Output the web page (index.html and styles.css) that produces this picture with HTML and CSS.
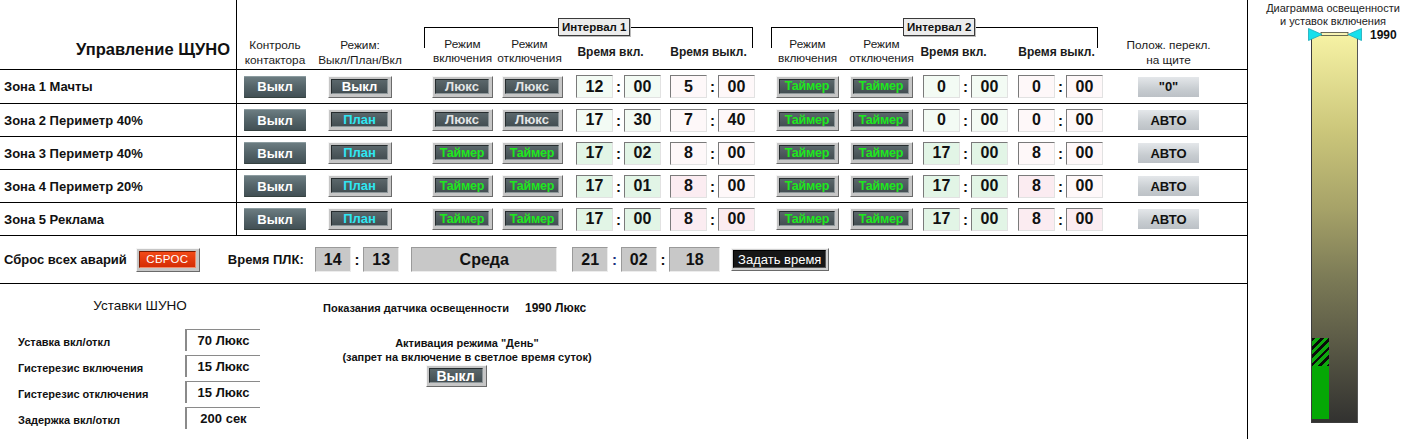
FILE: index.html
```html
<!DOCTYPE html>
<html lang="ru">
<head>
<meta charset="utf-8">
<title>Управление ЩУНО</title>
<link rel="stylesheet" href="styles.css">
</head>
<body>
<div class="screen">
  <main class="board">
    <section class="zones">
      <div class="row head">
        <div class="name title k1">Управление ЩУНО</div>
        <div class="cell k2"><div class="cap two w62">Контроль<br>контактора</div></div>
        <div class="cell k3"><div class="cap two w64">Режим:<br>Выкл/План/Вкл</div></div>
        <div class="cell k4"><div class="cap mode w61">Режим<br>включения</div></div>
        <div class="cell k5"><div class="cap mode w61 nudge-l">Режим<br>отключения</div></div>
        <div class="cell k6"><div class="cap time w85 on1">Время вкл.</div></div>
        <div class="cell k7"><div class="cap time w85 off1">Время выкл.</div></div>
        <div class="cell k8"><div class="cap mode w63">Режим<br>включения</div></div>
        <div class="cell k9"><div class="cap mode w63">Режим<br>отключения</div></div>
        <div class="cell k10"><div class="cap time w85 on2">Время вкл.</div></div>
        <div class="cell k11"><div class="cap time w85 off2">Время выкл.</div></div>
        <div class="cell k12"><div class="cap two w61">Полож. перекл.<br>на щите</div></div>
        <div class="bracket first"><span class="tag">Интервал 1</span></div>
        <div class="bracket second"><span class="tag">Интервал 2</span></div>
      </div>

      <div class="row zone">
        <div class="name">Зона 1 Мачты</div>
        <div class="cell"><span class="flat">Выкл</span></div>
        <div class="cell"><span class="raised w64"><span class="face">Выкл</span></span></div>
        <div class="cell"><span class="raised w61"><span class="face lux">Люкс</span></span></div>
        <div class="cell"><span class="raised w61"><span class="face lux">Люкс</span></span></div>
        <div class="cell"><span class="clock"><span class="num on pale">12</span><span class="colon">:</span><span class="num on pale">00</span></span></div>
        <div class="cell"><span class="clock"><span class="num off pale">5</span><span class="colon">:</span><span class="num off pale">00</span></span></div>
        <div class="cell"><span class="raised w63"><span class="face timer">Таймер</span></span></div>
        <div class="cell"><span class="raised w63"><span class="face timer">Таймер</span></span></div>
        <div class="cell"><span class="clock"><span class="num on pale">0</span><span class="colon">:</span><span class="num on pale">00</span></span></div>
        <div class="cell"><span class="clock"><span class="num off pale">0</span><span class="colon">:</span><span class="num off pale">00</span></span></div>
        <div class="cell"><span class="switch">"0"</span></div>
      </div>

      <div class="row zone">
        <div class="name">Зона 2 Периметр 40%</div>
        <div class="cell"><span class="flat">Выкл</span></div>
        <div class="cell"><span class="raised w64"><span class="face plan">План</span></span></div>
        <div class="cell"><span class="raised w61"><span class="face lux">Люкс</span></span></div>
        <div class="cell"><span class="raised w61"><span class="face lux">Люкс</span></span></div>
        <div class="cell"><span class="clock"><span class="num on pale">17</span><span class="colon">:</span><span class="num on pale">30</span></span></div>
        <div class="cell"><span class="clock"><span class="num off pale">7</span><span class="colon">:</span><span class="num off pale">40</span></span></div>
        <div class="cell"><span class="raised w63"><span class="face timer">Таймер</span></span></div>
        <div class="cell"><span class="raised w63"><span class="face timer">Таймер</span></span></div>
        <div class="cell"><span class="clock"><span class="num on pale">0</span><span class="colon">:</span><span class="num on pale">00</span></span></div>
        <div class="cell"><span class="clock"><span class="num off pale">0</span><span class="colon">:</span><span class="num off pale">00</span></span></div>
        <div class="cell"><span class="switch">АВТО</span></div>
      </div>

      <div class="row zone">
        <div class="name">Зона 3 Периметр 40%</div>
        <div class="cell"><span class="flat">Выкл</span></div>
        <div class="cell"><span class="raised w64"><span class="face plan">План</span></span></div>
        <div class="cell"><span class="raised w61"><span class="face timer">Таймер</span></span></div>
        <div class="cell"><span class="raised w61"><span class="face timer">Таймер</span></span></div>
        <div class="cell"><span class="clock"><span class="num on">17</span><span class="colon">:</span><span class="num on">02</span></span></div>
        <div class="cell"><span class="clock"><span class="num off pale">8</span><span class="colon">:</span><span class="num off pale">00</span></span></div>
        <div class="cell"><span class="raised w63"><span class="face timer">Таймер</span></span></div>
        <div class="cell"><span class="raised w63"><span class="face timer">Таймер</span></span></div>
        <div class="cell"><span class="clock"><span class="num on">17</span><span class="colon">:</span><span class="num on">00</span></span></div>
        <div class="cell"><span class="clock"><span class="num off pale">8</span><span class="colon">:</span><span class="num off pale">00</span></span></div>
        <div class="cell"><span class="switch">АВТО</span></div>
      </div>

      <div class="row zone">
        <div class="name">Зона 4 Периметр 20%</div>
        <div class="cell"><span class="flat">Выкл</span></div>
        <div class="cell"><span class="raised w64"><span class="face plan">План</span></span></div>
        <div class="cell"><span class="raised w61"><span class="face timer">Таймер</span></span></div>
        <div class="cell"><span class="raised w61"><span class="face timer">Таймер</span></span></div>
        <div class="cell"><span class="clock"><span class="num on">17</span><span class="colon">:</span><span class="num on">01</span></span></div>
        <div class="cell"><span class="clock"><span class="num off">8</span><span class="colon">:</span><span class="num off pale">00</span></span></div>
        <div class="cell"><span class="raised w63"><span class="face timer">Таймер</span></span></div>
        <div class="cell"><span class="raised w63"><span class="face timer">Таймер</span></span></div>
        <div class="cell"><span class="clock"><span class="num on">17</span><span class="colon">:</span><span class="num on">00</span></span></div>
        <div class="cell"><span class="clock"><span class="num off">8</span><span class="colon">:</span><span class="num off pale">00</span></span></div>
        <div class="cell"><span class="switch">АВТО</span></div>
      </div>

      <div class="row zone">
        <div class="name">Зона 5 Реклама</div>
        <div class="cell"><span class="flat">Выкл</span></div>
        <div class="cell"><span class="raised w64"><span class="face plan">План</span></span></div>
        <div class="cell"><span class="raised w61"><span class="face timer">Таймер</span></span></div>
        <div class="cell"><span class="raised w61"><span class="face timer">Таймер</span></span></div>
        <div class="cell"><span class="clock"><span class="num on">17</span><span class="colon">:</span><span class="num on">00</span></span></div>
        <div class="cell"><span class="clock"><span class="num off">8</span><span class="colon">:</span><span class="num off">00</span></span></div>
        <div class="cell"><span class="raised w63"><span class="face timer">Таймер</span></span></div>
        <div class="cell"><span class="raised w63"><span class="face timer">Таймер</span></span></div>
        <div class="cell"><span class="clock"><span class="num on">17</span><span class="colon">:</span><span class="num on">00</span></span></div>
        <div class="cell"><span class="clock"><span class="num off">8</span><span class="colon">:</span><span class="num off">00</span></span></div>
        <div class="cell"><span class="switch">АВТО</span></div>
      </div>
    </section>

    <section class="plc">
      <span class="label reset-label">Сброс всех аварий</span>
      <span class="raised reset"><span class="face red">СБРОС</span></span>
      <span class="label plc-label">Время ПЛК:</span>
      <span class="grey hh">14</span>
      <span class="sep">:</span>
      <span class="grey">13</span>
      <span class="grey day">Среда</span>
      <span class="grey dd">21</span>
      <span class="sep blue">:</span>
      <span class="grey">02</span>
      <span class="sep">:</span>
      <span class="grey yy">18</span>
      <span class="raised set"><span class="face black">Задать время</span></span>
    </section>

    <section class="lower">
      <div class="setpoints">
        <div class="sp-title">Уставки ШУНО</div>
        <div class="sp-grid">
          <span class="sp-label">Уставка вкл/откл</span><span class="sp-box">70 Люкс</span>
          <span class="sp-label">Гистерезис включения</span><span class="sp-box">15 Люкс</span>
          <span class="sp-label">Гистерезис отключения</span><span class="sp-box">15 Люкс</span>
          <span class="sp-label">Задержка вкл/откл</span><span class="sp-box">200 сек</span>
        </div>
      </div>
      <div class="sensor">
        <div class="reading"><span>Показания датчика освещенности</span><span class="lux-value">1990 Люкс</span></div>
        <div class="daymode">
          <span>Активация режима "День"</span>
          <span>(запрет на включение в светлое время суток)</span>
          <span class="raised w61 day-btn"><span class="face">Выкл</span></span>
        </div>
      </div>
    </section>
  </main>

  <aside class="gauge">
    <div class="gauge-title">Диаграмма освещенности<br>и уставок включения</div>
    <div class="column">
      <div class="marker">
        <svg width="56" height="14" viewBox="0 0 56 14">
          <rect x="13" y="4.5" width="27" height="3" fill="#f7f3b4" stroke="#4a4a3a" stroke-width="0.8"/>
          <polygon points="0.5,0.5 14,6.5 0.5,12.5" fill="#16e0ec" stroke="#1aa8b8" stroke-width="0.8"/>
          <polygon points="53.5,0.5 40,6.5 53.5,12.5" fill="#16e0ec" stroke="#1aa8b8" stroke-width="0.8"/>
        </svg>
        <span class="marker-value">1990</span>
      </div>
      <div class="level">
        <div class="hatch"></div>
        <div class="fill"></div>
      </div>
    </div>
  </aside>
</div>
</body>
</html>
```

FILE: styles.css
```css
* { box-sizing: border-box; }

html, body {
  margin: 0;
  background: #fff;
}

body {
  font-family: "Liberation Sans", Arial, sans-serif;
  color: #111;
  width: 1418px;
  height: 439px;
  overflow: hidden;
}

.screen {
  display: flex;
  height: 439px;
}

/* ---------- main board ---------- */

.board {
  width: 1248px;
  flex: none;
  border-right: 1px solid #000;
  display: flex;
  flex-direction: column;
}

.row {
  display: grid;
  grid-template-columns: 237px 69px 86px 101px 70px 98px 94px 84px 74px 95px 95px 96px 1fr;
  border-bottom: 1px solid #000;
}

.head {
  height: 70px;
  align-items: end;
}

.zone {
  height: 33px;
  align-items: center;
}

.head + .zone {
  height: 34px;
}

.name {
  height: 100%;
  border-right: 1px solid #000;
  display: flex;
  align-items: center;
  padding-left: 4px;
  font-size: 13px;
  font-weight: bold;
}

.name.title {
  justify-content: flex-end;
  align-items: flex-end;
  padding: 0 6px 10px 0;
  font-size: 16.5px;
}

.cell {
  display: flex;
  justify-content: flex-end;
  align-items: center;
}

/* header grid placement */
.head > * { grid-row: 1; }
.k1 { grid-column: 1; }
.k2 { grid-column: 2; }
.k3 { grid-column: 3; }
.k4 { grid-column: 4; }
.k5 { grid-column: 5; }
.k6 { grid-column: 6; }
.k7 { grid-column: 7; }
.k8 { grid-column: 8; }
.k9 { grid-column: 9; }
.k10 { grid-column: 10; }
.k11 { grid-column: 11; }
.k12 { grid-column: 12; }

.cap {
  display: flex;
  justify-content: center;
  text-align: center;
  white-space: nowrap;
  font-size: 11.8px;
  line-height: 14.5px;
  color: #1a1a1a;
}

.cap.two { padding-bottom: 2px; }
.cap.mode { padding-bottom: 4px; line-height: 14px; }
.cap.time { padding-bottom: 10px; font-weight: bold; font-size: 12px; }
.cap.nudge-l { padding-right: 6px; }
.cap.on1 { padding-right: 16px; }
.cap.off1 { padding-right: 8px; }
.cap.on2 { padding-right: 24px; }
.cap.off2 { padding-right: 8px; }

.w61 { width: 61px; }
.w62 { width: 62px; }
.w63 { width: 63px; }
.w64 { width: 64px; }
.w85 { width: 85px; }

.bracket {
  align-self: start;
  margin-top: 27px;
  height: 21px;
  border: 1px solid #000;
  border-bottom: none;
  display: flex;
}

.bracket.first {
  grid-column: 4 / 8;
  margin-left: 32px;
  margin-right: 2px;
}

.bracket.second {
  grid-column: 8 / 12;
  margin-left: 16px;
  margin-right: 5px;
}

.tag {
  height: 18px;
  margin-top: -10px;
  padding: 0 3px;
  background: #ececec;
  border: 1px solid #3a3a3a;
  box-shadow: 1px 1px 0 #bbb;
  font-size: 11.5px;
  font-weight: bold;
  line-height: 16px;
  white-space: nowrap;
}

.first .tag { margin-left: 133px; }
.second .tag { margin-left: 131px; }

/* ---------- controls ---------- */

.flat {
  width: 62px;
  height: 22px;
  display: flex;
  align-items: center;
  justify-content: center;
  background: linear-gradient(#6e7f84, #56666b 45%, #404e53);
  border-radius: 1px;
  box-shadow: inset 0 1px 0 #8c9ca0, inset 0 -1px 0 #35413f;
  color: #fff;
  font-size: 13px;
  font-weight: bold;
}

.raised {
  height: 22px;
  display: flex;
  padding: 2px 3px 3px 2px;
  background: #c6c6c6;
  border: 1px solid;
  border-color: #f6f6f6 #6a6a6a #6a6a6a #f6f6f6;
}

.face {
  flex: 1;
  display: flex;
  align-items: center;
  justify-content: center;
  background: linear-gradient(#5b676b, #434e52);
  border: 1px solid;
  border-color: #262c2e #8d9699 #8d9699 #262c2e;
  color: #fff;
  font-size: 13px;
  font-weight: bold;
  white-space: nowrap;
  overflow: hidden;
}

.face.plan { color: #2fe6f2; }
.face.lux { color: #e4e6e6; }
.face.timer {
  color: #1ee81e;
  font-size: 12.5px;
  letter-spacing: -0.2px;
}

.clock {
  width: 85px;
  display: flex;
  align-items: center;
}

.num {
  width: 37px;
  height: 23px;
  display: flex;
  align-items: center;
  justify-content: center;
  border: 1px solid;
  border-color: #7a7a7a #e2e2e2 #e2e2e2 #7a7a7a;
  font-size: 16px;
  font-weight: bold;
}

.num.on { background: #e2f5e6; }
.num.on.pale { background: #f3fbf4; }
.num.off { background: #fbecf1; }
.num.off.pale { background: #fef8f9; }

.colon {
  width: 11px;
  text-align: center;
  font-size: 15px;
  font-weight: bold;
}

.switch {
  width: 61px;
  height: 20px;
  display: flex;
  align-items: center;
  justify-content: center;
  background: linear-gradient(#e4e7ea, #c8cdd1 60%, #bcc1c6);
  font-size: 13px;
  font-weight: bold;
  color: #111;
}

/* ---------- PLC row ---------- */

.plc {
  height: 48px;
  border-bottom: 1px solid #000;
  display: flex;
  align-items: center;
}

.label {
  font-size: 13px;
  font-weight: bold;
}

.reset-label { margin-left: 4px; }

.raised.reset {
  width: 64px;
  height: 24px;
  margin-left: 9px;
}

.face.red {
  background: linear-gradient(#f24a18, #d52c04);
  border-color: #7a1a00 #f08a6a #f08a6a #7a1a00;
  font-weight: normal;
  font-size: 11.5px;
  letter-spacing: 0.3px;
}

.plc-label { margin-left: 28px; }

.grey {
  width: 36px;
  height: 25px;
  display: flex;
  align-items: center;
  justify-content: center;
  background: #c8c8c8;
  border: 1px solid;
  border-color: #9a9a9a #ececec #ececec #9a9a9a;
  font-size: 16px;
  font-weight: bold;
}

.grey.hh { margin-left: 11px; }
.grey.day { width: 146px; margin-left: 12px; }
.grey.dd { margin-left: 15px; }
.grey.yy { width: 51px; }

.sep {
  width: 12.5px;
  text-align: center;
  font-size: 15px;
  font-weight: bold;
}

.sep.blue { color: #203080; }

.raised.set {
  width: 98px;
  height: 23px;
  margin-left: 11px;
  padding: 1px 2px 2px 1px;
  background: #d0d0d0;
}

.face.black {
  background: #161616;
  border-color: #000 #555 #555 #000;
  font-weight: normal;
  font-size: 13px;
}

/* ---------- lower block ---------- */

.lower {
  flex: 1;
  display: flex;
}

.setpoints {
  width: 300px;
  padding-top: 14px;
}

.sp-title {
  width: 280px;
  text-align: center;
  font-size: 13.5px;
  line-height: 15px;
}

.sp-grid {
  margin-top: 16px;
  padding-left: 18px;
  display: grid;
  grid-template-columns: 167px 75px;
  grid-auto-rows: 22px;
  row-gap: 4px;
  align-items: center;
}

.sp-label {
  font-size: 11px;
  font-weight: bold;
  padding-top: 3px;
}

.sp-box {
  height: 22px;
  display: flex;
  align-items: center;
  justify-content: center;
  border-top: 1px solid #8a8a8a;
  border-left: 2px solid #8a8a8a;
  font-size: 13px;
  font-weight: bold;
}

.sensor {
  margin-left: 23px;
  padding-top: 17px;
  display: flex;
  flex-direction: column;
}

.reading {
  display: flex;
  font-size: 11px;
  font-weight: bold;
  line-height: 14px;
}

.lux-value {
  margin-left: 16px;
  font-size: 12px;
}

.daymode {
  margin-top: 21px;
  margin-left: 6px;
  width: 276px;
  display: flex;
  flex-direction: column;
  align-items: center;
  font-size: 11px;
  font-weight: bold;
  line-height: 14px;
}

.raised.day-btn {
  margin-top: 1px;
  margin-right: 22px;
  height: 22px;
}

.day-btn .face { font-size: 14px; }

/* ---------- illuminance gauge ---------- */

.gauge {
  flex: 1;
  display: flex;
  flex-direction: column;
  align-items: center;
  padding-top: 2px;
}

.gauge-title {
  text-align: center;
  font-size: 11px;
  line-height: 13px;
  color: #222;
}

.column {
  position: relative;
  margin-top: 7px;
  margin-left: 3px;
  width: 47px;
  height: 388px;
  border-left: 1px solid #3c3c3c;
  border-right: 1px solid #555;
  border-bottom: 1px solid #3c3c3c;
  background: linear-gradient(#f6f2a4, #cbc67a 25%, #a6a268 45%, #7b7a56 63%, #5e5d48 78%, #323230);
  display: flex;
  flex-direction: column;
  justify-content: flex-end;
  padding-bottom: 3px;
}

.marker {
  position: absolute;
  left: -4px;
  top: -7px;
  display: flex;
  align-items: center;
}

.marker svg { display: block; }

.marker-value {
  margin-left: 6px;
  font-size: 12px;
  font-weight: bold;
}

.level {
  width: 17px;
  display: flex;
  flex-direction: column;
}

.hatch {
  height: 28px;
  background: repeating-linear-gradient(135deg, #0a0a0a 0 2.5px, #0ea80e 2.5px 6px);
}

.fill {
  height: 53px;
  background: #05a805;
}
```
